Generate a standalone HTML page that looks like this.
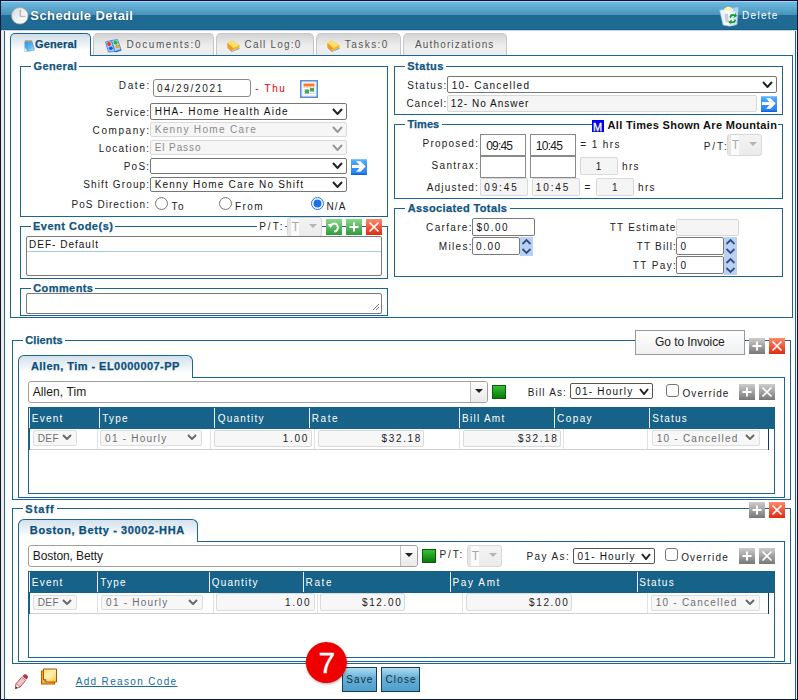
<!DOCTYPE html><html><head><meta charset="utf-8"><style>
html,body{margin:0;padding:0;width:798px;height:700px;overflow:hidden;background:#fff;font-family:"Liberation Sans", sans-serif;}
.a{position:absolute}
.t{white-space:pre}
svg{display:block}
</style></head><body>
<div class="a" style="left:0px;top:0px;width:798px;height:1px;background:#0b1730"></div>
<div class="a" style="left:0px;top:699px;width:798px;height:1px;background:#0b1730"></div>
<div class="a" style="left:0px;top:0px;width:1px;height:700px;background:#0b1730"></div>
<div class="a" style="left:797px;top:0px;width:1px;height:700px;background:#0b1730"></div>
<div class="a" style="left:1px;top:31px;width:3px;height:668px;background:#eeeae7"></div>
<div class="a" style="left:4px;top:31px;width:1px;height:668px;background:#1b6690"></div>
<div class="a" style="left:796px;top:31px;width:1px;height:668px;background:#eeeae7"></div>
<div class="a" style="left:795px;top:31px;width:1px;height:668px;background:#1b6690"></div>
<div class="a" style="left:1px;top:1px;width:796px;height:1px;background:#b9c9f5"></div>
<div class="a" style="left:1px;top:2px;width:796px;height:13px;background:linear-gradient(#6dbbe0,#4892bb)"></div>
<div class="a" style="left:1px;top:15px;width:796px;height:15px;background:#1e6a92"></div>
<div class="a" style="left:1px;top:29px;width:796px;height:1px;background:#195f85"></div>
<div class="a" style="left:1px;top:30px;width:796px;height:1px;background:#c7d5f7"></div>
<svg class="a" style="left:11px;top:7px" width="18" height="18" viewBox="0 0 18 18">
<defs><linearGradient id="cg" x1="0" y1="0" x2="1" y2="1"><stop offset="0" stop-color="#d8dadd"/><stop offset="0.5" stop-color="#eef0f2"/><stop offset="1" stop-color="#ffffff"/></linearGradient></defs>
<circle cx="8.8" cy="8.8" r="8.3" fill="url(#cg)" stroke="#a8a29a" stroke-width="0.7"/>
<line x1="9.2" y1="2.6" x2="9.2" y2="9.4" stroke="#8c9298" stroke-width="0.8"/>
<line x1="9.2" y1="9.4" x2="14.5" y2="9.4" stroke="#a0a6ac" stroke-width="0.8"/>
</svg>
<div class="a t" style="left:30.34px;top:9px;font-size:13px;line-height:13px;color:#fff;font-weight:700;letter-spacing:0.412px;text-shadow:0 0 1px #0a3a5a">Schedule Detail</div>
<svg class="a" style="left:719px;top:6px" width="21" height="21" viewBox="0 0 21 21">
<defs><linearGradient id="bing" x1="0" y1="0" x2="1" y2="0"><stop offset="0" stop-color="#d8f0ff"/><stop offset="0.45" stop-color="#ffffff"/><stop offset="1" stop-color="#bcd8f4"/></linearGradient></defs>
<path d="M0.5,4 L19.5,1.5 L18,18.5 Q11,21.5 4,19 Z" fill="url(#bing)" stroke="#9bb4cc" stroke-width="0.6"/>
<path d="M5,2.5 L9,0.6 L13,1.8 L12,4.5 L6,5 Z" fill="#fff3a0"/>
<path d="M14,1.8 L19,1.2 L18,5 L14,5 Z" fill="#a8ccff"/>
<path d="M5.5,8 L9,7.5 L10,17 L6.5,16 Z" fill="#c8b8f0" opacity="0.8"/>
<path d="M10.5,11 Q11,7 16,8.5 L16,6.5 L18,10 L14.5,12 L15.3,10.2 Q12.5,9.5 11.8,12.5 Z" fill="#10a020"/>
<path d="M17,14 Q16.3,18.2 11.5,17 L11.5,19 L9.5,15.5 L13,13.5 L12.3,15.3 Q15,16 15.6,13.2 Z" fill="#10a020"/>
</svg>
<div class="a t" style="left:741.98px;top:11px;font-size:10px;line-height:10px;color:#fff;font-weight:400;letter-spacing:1.312px;">Delete</div>
<div class="a" style="left:10px;top:55px;width:783px;height:263px;border:1px solid #1b6690;box-sizing:border-box"></div>
<div class="a" style="left:10px;top:33px;width:81px;height:23px;border:1px solid #1b6690;border-bottom:none;box-sizing:border-box;border-radius:5px 5px 0 0;background:linear-gradient(#cfdde8,#ffffff 75%)"></div>
<svg class="a" style="left:24px;top:40px" width="11" height="13" viewBox="0 0 11 13">
<defs><linearGradient id="ntg" x1="0" y1="0" x2="1" y2="1"><stop offset="0" stop-color="#2a90e8"/><stop offset="0.6" stop-color="#5ec0fa"/><stop offset="1" stop-color="#c8f0d0"/></linearGradient></defs>
<rect x="0.8" y="0.3" width="7.5" height="2" fill="#b09a70"/>
<path d="M0.8,2 L8.3,2 L10.6,10.2 L1,11.8 Z" fill="url(#ntg)" stroke="#7a90c8" stroke-width="0.6"/>
<path d="M1,7.5 L3.5,11.4 L1,11.8 Z" fill="#d8f8b0"/>
</svg>
<div class="a t" style="left:35.05px;top:39px;font-size:11px;line-height:11px;color:#0c4a72;font-weight:700;letter-spacing:0.126px;-webkit-text-stroke:0.25px #0c4a72">General</div>
<div class="a" style="left:93px;top:33px;width:121px;height:23px;border:1px solid #c6c6c6;border-bottom:none;box-sizing:border-box;border-radius:5px 5px 0 0;background:linear-gradient(#d4d4d4,#eeeeee 55%,#ececec)"></div>
<svg class="a" style="left:105px;top:39px" width="18" height="14" viewBox="0 0 18 14">
<path d="M0.5,3 L6.5,1.5 L10,12.5 L3.5,13 Z" fill="#9ccaf6" stroke="#3a78d8" stroke-width="0.8"/>
<path d="M6.5,1.5 L12.5,0.5 L16,10.5 L10,12.5 Z" fill="#b4dafa" stroke="#3a78d8" stroke-width="0.8"/>
<path d="M10,12.5 L16,10.5 L16.5,11.5 L10.5,13.5 Z" fill="#2a60c0"/>
<ellipse cx="4" cy="5" rx="1.8" ry="2" fill="#ff2a10"/>
<ellipse cx="5.8" cy="9.3" rx="1.9" ry="1.8" fill="#0a5af0"/>
<ellipse cx="10.5" cy="3.6" rx="2" ry="1.9" fill="#10c020"/>
<ellipse cx="12.3" cy="7.6" rx="2" ry="2" fill="#ffa010"/>
</svg>
<div class="a t" style="left:126.58px;top:40px;font-size:10px;line-height:10px;color:#555;font-weight:400;letter-spacing:1.489px;">Documents:0</div>
<div class="a" style="left:216px;top:33px;width:98px;height:23px;border:1px solid #c6c6c6;border-bottom:none;box-sizing:border-box;border-radius:5px 5px 0 0;background:linear-gradient(#d4d4d4,#eeeeee 55%,#ececec)"></div>
<svg class="a" style="left:227px;top:40px" width="13" height="12" viewBox="0 0 13 12">
<path d="M0.5,6.5 L4.5,11 L12.5,7.5 L12.5,9 L4.5,12 L0.5,8 Z" fill="#9c9ccc"/>
<path d="M0.5,3 L5,0.5 L12.5,5 L12.5,7.5 L4.5,11 L0.5,6.5 Z" fill="#f2b82a"/>
<path d="M0.5,3 L5,0.5 L12.5,5 L6,8 Z" fill="#fde070"/>
<path d="M0.5,3 L6,8 L4.5,11 L0.5,6.5 Z" fill="#f59a10"/>
</svg>
<div class="a t" style="left:244.50px;top:40px;font-size:10px;line-height:10px;color:#555;font-weight:400;letter-spacing:1.206px;">Call Log:0</div>
<div class="a" style="left:316px;top:33px;width:85px;height:23px;border:1px solid #c6c6c6;border-bottom:none;box-sizing:border-box;border-radius:5px 5px 0 0;background:linear-gradient(#d4d4d4,#eeeeee 55%,#ececec)"></div>
<svg class="a" style="left:327px;top:40px" width="13" height="12" viewBox="0 0 13 12">
<path d="M0.5,6.5 L4.5,11 L12.5,7.5 L12.5,9 L4.5,12 L0.5,8 Z" fill="#9c9ccc"/>
<path d="M0.5,3 L5,0.5 L12.5,5 L12.5,7.5 L4.5,11 L0.5,6.5 Z" fill="#f2b82a"/>
<path d="M0.5,3 L5,0.5 L12.5,5 L6,8 Z" fill="#fde070"/>
<path d="M0.5,3 L6,8 L4.5,11 L0.5,6.5 Z" fill="#f59a10"/>
</svg>
<div class="a t" style="left:344.78px;top:40px;font-size:10px;line-height:10px;color:#555;font-weight:400;letter-spacing:1.450px;">Tasks:0</div>
<div class="a" style="left:403px;top:33px;width:104px;height:23px;border:1px solid #c6c6c6;border-bottom:none;box-sizing:border-box;border-radius:5px 5px 0 0;background:linear-gradient(#d4d4d4,#eeeeee 55%,#ececec)"></div>
<div class="a t" style="left:414.98px;top:40px;font-size:10px;line-height:10px;color:#555;font-weight:400;letter-spacing:1.155px;">Authorizations</div>
<div class="a" style="left:10px;top:55px;width:783px;height:1px;background:#1b6690"></div>
<div class="a" style="left:11px;top:55px;width:79px;height:1px;background:#fff"></div>
<div class="a" style="left:20px;top:66px;width:368px;height:151px;border:1px solid #1b6690;box-sizing:border-box"></div>
<div class="a" style="left:31px;top:65px;width:48px;height:3px;background:#fff"></div>
<div class="a t" style="left:33.55px;top:61px;font-size:11px;line-height:11px;color:#10557f;font-weight:700;letter-spacing:0.376px;-webkit-text-stroke:0.25px #10557f">General</div>
<div class="a t" style="left:118.78px;top:81px;font-size:10px;line-height:10px;color:#222;font-weight:400;letter-spacing:1.658px;">Date:</div>
<div class="a" style="left:153px;top:79px;width:98px;height:18px;background:#fff;border:1px solid #8a8a8a;box-sizing:border-box;border-radius:3px"></div>
<div class="a t" style="left:157.01px;top:84px;font-size:10px;line-height:10px;color:#1a1a1a;font-weight:400;letter-spacing:1.702px;">04/29/2021</div>
<div class="a t" style="left:255.36px;top:84px;font-size:10px;line-height:10px;color:#e80000;font-weight:400;letter-spacing:1.585px;">- Thu</div>
<svg class="a" style="left:300px;top:80px" width="18" height="18" viewBox="0 0 18 18">
<rect x="0.8" y="0.8" width="16.4" height="16.4" fill="#fff" stroke="#5b8ed5" stroke-width="1.6"/>
<rect x="2.2" y="2.2" width="13.6" height="13.6" fill="none" stroke="#d6e6fa" stroke-width="0.8"/>
<rect x="3.5" y="3.5" width="11" height="3" fill="#ff7a22"/>
<path d="M3.5,7.5 H14.5 M3.5,10.5 H14.5 M3.5,13.5 H14.5 M4.5,7 V15 M7.5,7 V15 M10.5,7 V15 M13.5,7 V15" stroke="#a9c8ef" stroke-width="0.7" stroke-dasharray="1,1"/>
<rect x="5" y="9.5" width="4" height="4" fill="#4aa84a"/>
<rect x="10" y="8" width="4" height="3.5" fill="#4aa84a"/>
</svg>
<div class="a t" style="left:106.05px;top:108px;font-size:10px;line-height:10px;color:#222;font-weight:400;letter-spacing:0.990px;">Service:</div>
<div class="a" style="left:150px;top:103px;width:197px;height:17px;background:#fff;border:1px solid #767676;box-sizing:border-box;border-radius:2px"></div>
<svg class="a" style="left:332px;top:108px" width="11" height="7" viewBox="0 0 11 7"><polyline points="1,1 5.5,6 10,1" fill="none" stroke="#222" stroke-width="2"/></svg>
<div class="a t" style="left:154.68px;top:107px;font-size:10px;line-height:10px;color:#111;font-weight:400;letter-spacing:1.252px;">HHA- Home Health Aide</div>
<div class="a t" style="left:92.60px;top:126px;font-size:10px;line-height:10px;color:#222;font-weight:400;letter-spacing:1.561px;">Company:</div>
<div class="a" style="left:150px;top:122px;width:197px;height:15px;background:#f6f6f6;border:1px solid #dadada;box-sizing:border-box;border-radius:2px"></div>
<svg class="a" style="left:332px;top:126px" width="11" height="7" viewBox="0 0 11 7"><polyline points="1,1 5.5,6 10,1" fill="none" stroke="#999" stroke-width="2"/></svg>
<div class="a t" style="left:154.68px;top:125.30000000000001px;font-size:10px;line-height:10px;color:#8a8a8a;font-weight:400;letter-spacing:1.343px;">Kenny Home Care</div>
<div class="a t" style="left:98.68px;top:144px;font-size:10px;line-height:10px;color:#222;font-weight:400;letter-spacing:1.230px;">Location:</div>
<div class="a" style="left:150px;top:140px;width:197px;height:15px;background:#f6f6f6;border:1px solid #dadada;box-sizing:border-box;border-radius:2px"></div>
<svg class="a" style="left:332px;top:144px" width="11" height="7" viewBox="0 0 11 7"><polyline points="1,1 5.5,6 10,1" fill="none" stroke="#999" stroke-width="2"/></svg>
<div class="a t" style="left:154.68px;top:143px;font-size:10px;line-height:10px;color:#8a8a8a;font-weight:400;letter-spacing:0.910px;">El Passo</div>
<div class="a t" style="left:123.68px;top:162px;font-size:10px;line-height:10px;color:#222;font-weight:400;letter-spacing:1.250px;">PoS:</div>
<div class="a" style="left:150px;top:158px;width:197px;height:16px;background:#fff;border:1px solid #767676;box-sizing:border-box;border-radius:2px"></div>
<svg class="a" style="left:332px;top:162px" width="11" height="7" viewBox="0 0 11 7"><polyline points="1,1 5.5,6 10,1" fill="none" stroke="#222" stroke-width="2"/></svg>
<div class="a t" style="left:83.15px;top:180px;font-size:10px;line-height:10px;color:#222;font-weight:400;letter-spacing:1.145px;">Shift Group:</div>
<div class="a" style="left:150px;top:177px;width:197px;height:15px;background:#fff;border:1px solid #767676;box-sizing:border-box;border-radius:2px"></div>
<svg class="a" style="left:332px;top:181px" width="11" height="7" viewBox="0 0 11 7"><polyline points="1,1 5.5,6 10,1" fill="none" stroke="#222" stroke-width="2"/></svg>
<div class="a t" style="left:154.68px;top:179.5px;font-size:10px;line-height:10px;color:#111;font-weight:400;letter-spacing:1.203px;">Kenny Home Care No Shift</div>
<svg class="a" style="left:351px;top:159px" width="16" height="16" viewBox="0 0 16 16">
<defs><linearGradient id="ag351159" x1="0" y1="0" x2="0" y2="1"><stop offset="0" stop-color="#8fd0ff"/><stop offset="0.12" stop-color="#4aa8fa"/><stop offset="0.85" stop-color="#2a86f0"/><stop offset="1" stop-color="#0a5ad8"/></linearGradient></defs>
<rect x="0" y="0" width="16" height="16" fill="url(#ag351159)"/>
<path d="M1,6 L8.5,6 L5,2.2 L9.6,2.2 L14.6,7.5 L9.6,12.8 L5,12.8 L8.5,9 L1,9 Z" fill="#fff"/>
</svg>
<div class="a t" style="left:71.58px;top:199.5px;font-size:10px;line-height:10px;color:#222;font-weight:400;letter-spacing:1.032px;">PoS Direction:</div>
<svg class="a" style="left:155px;top:197px" width="13" height="13" viewBox="0 0 13 13"><circle cx="6.5" cy="6.5" r="6" fill="#fff" stroke="#767676" stroke-width="1"/></svg>
<div class="a t" style="left:171.58px;top:201.6px;font-size:10px;line-height:10px;color:#222;font-weight:400;letter-spacing:1.370px;">To</div>
<svg class="a" style="left:219px;top:197px" width="13" height="13" viewBox="0 0 13 13"><circle cx="6.5" cy="6.5" r="6" fill="#fff" stroke="#767676" stroke-width="1"/></svg>
<div class="a t" style="left:234.88px;top:201.6px;font-size:10px;line-height:10px;color:#222;font-weight:400;letter-spacing:1.480px;">From</div>
<svg class="a" style="left:311px;top:197px" width="13" height="13" viewBox="0 0 13 13"><circle cx="6.5" cy="6.5" r="6" fill="#fff" stroke="#1a73e8" stroke-width="1"/><circle cx="6.5" cy="6.5" r="4" fill="#1a73e8"/></svg>
<div class="a t" style="left:326.38px;top:201.6px;font-size:10px;line-height:10px;color:#222;font-weight:400;letter-spacing:1.235px;">N/A</div>
<div class="a" style="left:20px;top:226px;width:368px;height:53px;border:1px solid #1b6690;box-sizing:border-box"></div>
<div class="a" style="left:30.700000000000003px;top:225px;width:84.7px;height:3px;background:#fff"></div>
<div class="a t" style="left:32.97px;top:221px;font-size:11px;line-height:11px;color:#10557f;font-weight:700;letter-spacing:0.501px;-webkit-text-stroke:0.25px #10557f">Event Code(s)</div>
<div class="a" style="left:257px;top:225px;width:28px;height:3px;background:#fff"></div>
<div class="a t" style="left:259.18px;top:222px;font-size:10px;line-height:10px;color:#222;font-weight:400;letter-spacing:2.033px;">P/T:</div>
<div class="a" style="left:287px;top:217px;width:35px;height:20px;background:linear-gradient(#f4f4f4,#ebebeb);border:1px solid #d8d8d8;box-sizing:border-box;border-radius:3px"></div>
<div class="a" style="left:291px;top:218px;width:8px;height:18px;background:#fbfbfb"></div>
<div class="a" style="left:288px;top:218px;width:3px;height:18px;background:#e6e6e6"></div>
<div class="a t" style="left:291.74px;top:221px;font-size:12px;line-height:12px;color:#aaaaaa;font-weight:400;letter-spacing:1.000px;">T</div>
<svg class="a" style="left:309px;top:224px" width="8" height="5"><polygon points="0,0 8,0 4,4" fill="#b4b4b4"/></svg>
<svg class="a" style="left:326px;top:219px" width="16" height="16" viewBox="0 0 16 16">
<defs><linearGradient id="b326219" x1="0" y1="0" x2="0" y2="1"><stop offset="0" stop-color="#8ad88a"/><stop offset="1" stop-color="#2f9a3a"/></linearGradient></defs>
<rect x="0" y="0" width="16" height="16" fill="url(#b326219)"/><path d="M4.5,6.5 A4,4 0 1 1 8,12.5" fill="none" stroke="#fff" stroke-width="2"/><polygon points="1.5,5 7.5,5 4.5,9" fill="#fff"/></svg>
<svg class="a" style="left:346px;top:219px" width="16" height="16" viewBox="0 0 16 16">
<defs><linearGradient id="b346219" x1="0" y1="0" x2="0" y2="1"><stop offset="0" stop-color="#8ad88a"/><stop offset="1" stop-color="#2f9a3a"/></linearGradient></defs>
<rect x="0" y="0" width="16" height="16" fill="url(#b346219)"/><path d="M7,3.5 L9,3.5 L9,7 L12.5,7 L12.5,9 L9,9 L9,12.5 L7,12.5 L7,9 L3.5,9 L3.5,7 L7,7 Z" fill="#fff"/></svg>
<svg class="a" style="left:366px;top:219px" width="16" height="16" viewBox="0 0 16 16">
<defs><linearGradient id="b366219" x1="0" y1="0" x2="0" y2="1"><stop offset="0" stop-color="#ff8a6a"/><stop offset="1" stop-color="#e02a10"/></linearGradient></defs>
<rect x="0" y="0" width="16" height="16" fill="url(#b366219)"/><path d="M3.5,3.5 L12.5,12.5 M12.5,3.5 L3.5,12.5" stroke="#fff" stroke-width="1.7"/></svg>
<div class="a" style="left:26px;top:236px;width:356px;height:40px;border:1px solid #7a7a7a;box-sizing:border-box;border-radius:2px;background:#fff"></div>
<div class="a" style="left:27px;top:251px;width:354px;height:1px;background:#a8cde0"></div>
<div class="a t" style="left:28.98px;top:240px;font-size:10px;line-height:10px;color:#111;font-weight:400;letter-spacing:1.017px;">DEF- Default</div>
<div class="a" style="left:20px;top:288px;width:368px;height:28px;border:1px solid #1b6690;box-sizing:border-box"></div>
<div class="a" style="left:30.700000000000003px;top:287px;width:64.8px;height:3px;background:#fff"></div>
<div class="a t" style="left:33.25px;top:283px;font-size:11px;line-height:11px;color:#10557f;font-weight:700;letter-spacing:0.408px;-webkit-text-stroke:0.25px #10557f">Comments</div>
<div class="a" style="left:26px;top:293px;width:356px;height:21px;border:1px solid #7a7a7a;box-sizing:border-box;border-radius:2px;background:#fff"></div>
<svg class="a" style="left:372px;top:303px" width="8" height="8"><path d="M7,1 L1,7 M7,4 L4,7" stroke="#777" stroke-width="1"/></svg>
<div class="a" style="left:394px;top:66px;width:389px;height:49px;border:1px solid #1b6690;box-sizing:border-box"></div>
<div class="a" style="left:404.6px;top:65px;width:41.39999999999998px;height:3px;background:#fff"></div>
<div class="a t" style="left:407.29px;top:61px;font-size:11px;line-height:11px;color:#10557f;font-weight:700;letter-spacing:0.506px;-webkit-text-stroke:0.25px #10557f">Status</div>
<div class="a t" style="left:407.25px;top:81px;font-size:10px;line-height:10px;color:#222;font-weight:400;letter-spacing:1.322px;">Status:</div>
<div class="a" style="left:447px;top:76px;width:330px;height:17px;background:#fff;border:1px solid #767676;box-sizing:border-box;border-radius:2px"></div>
<svg class="a" style="left:762px;top:81px" width="11" height="7" viewBox="0 0 11 7"><polyline points="1,1 5.5,6 10,1" fill="none" stroke="#222" stroke-width="2"/></svg>
<div class="a t" style="left:451.74px;top:80.5px;font-size:10px;line-height:10px;color:#111;font-weight:400;letter-spacing:1.292px;">10- Cancelled</div>
<div class="a t" style="left:406.40px;top:99px;font-size:10px;line-height:10px;color:#222;font-weight:400;letter-spacing:1.000px;">Cancel:</div>
<div class="a" style="left:447px;top:95px;width:310px;height:17px;background:#f5f5f5;border:1px solid #d8d8d8;box-sizing:border-box;border-radius:2px"></div>
<div class="a t" style="left:450.74px;top:99px;font-size:10px;line-height:10px;color:#111;font-weight:400;letter-spacing:1.000px;">12- No Answer</div>
<svg class="a" style="left:761px;top:96px" width="16" height="16" viewBox="0 0 16 16">
<defs><linearGradient id="ag76196" x1="0" y1="0" x2="0" y2="1"><stop offset="0" stop-color="#8fd0ff"/><stop offset="0.12" stop-color="#4aa8fa"/><stop offset="0.85" stop-color="#2a86f0"/><stop offset="1" stop-color="#0a5ad8"/></linearGradient></defs>
<rect x="0" y="0" width="16" height="16" fill="url(#ag76196)"/>
<path d="M1,6 L8.5,6 L5,2.2 L9.6,2.2 L14.6,7.5 L9.6,12.8 L5,12.8 L8.5,9 L1,9 Z" fill="#fff"/>
</svg>
<div class="a" style="left:394px;top:124px;width:389px;height:75px;border:1px solid #1b6690;box-sizing:border-box"></div>
<div class="a" style="left:404.6px;top:123px;width:37.099999999999966px;height:3px;background:#fff"></div>
<div class="a t" style="left:407.48px;top:119px;font-size:11px;line-height:11px;color:#10557f;font-weight:700;letter-spacing:0.017px;-webkit-text-stroke:0.25px #10557f">Times</div>
<div class="a" style="left:604px;top:121px;width:174px;height:6px;background:#fff"></div>
<div class="a" style="left:592px;top:120px;width:12px;height:12px;background:#0000f0"></div>
<div class="a t" style="left:593.10px;top:121.5px;font-size:11px;line-height:11px;color:#fff;font-weight:400;letter-spacing:1.000px;-webkit-text-stroke:0.3px #fff">M</div>
<div class="a t" style="left:607.54px;top:119.80000000000001px;font-size:11px;line-height:11px;color:#111;font-weight:700;letter-spacing:0.319px;">All Times Shown Are Mountain</div>
<div class="a t" style="left:422.58px;top:139px;font-size:10px;line-height:10px;color:#222;font-weight:400;letter-spacing:1.218px;">Proposed:</div>
<div class="a t" style="left:431.55px;top:161px;font-size:10px;line-height:10px;color:#222;font-weight:400;letter-spacing:1.303px;">Santrax:</div>
<div class="a t" style="left:426.78px;top:183px;font-size:10px;line-height:10px;color:#222;font-weight:400;letter-spacing:1.179px;">Adjusted:</div>
<div class="a" style="left:480px;top:134px;width:46px;height:22px;border:1px solid #8a8a8a;box-sizing:border-box;background:#fff"></div>
<div class="a" style="left:480px;top:156px;width:46px;height:22px;border:1px solid #8a8a8a;box-sizing:border-box;background:#fff"></div>
<div class="a" style="left:530px;top:134px;width:46px;height:22px;border:1px solid #8a8a8a;box-sizing:border-box;background:#fff"></div>
<div class="a" style="left:530px;top:156px;width:46px;height:22px;border:1px solid #8a8a8a;box-sizing:border-box;background:#fff"></div>
<div class="a t" style="left:486.23px;top:140px;font-size:12px;line-height:12px;color:#1a1a1a;font-weight:400;letter-spacing:-0.816px;">09:45</div>
<div class="a t" style="left:535.79px;top:140px;font-size:12px;line-height:12px;color:#1a1a1a;font-weight:400;letter-spacing:-0.705px;">10:45</div>
<div class="a t" style="left:580.22px;top:140px;font-size:10px;line-height:10px;color:#222;font-weight:400;letter-spacing:1.415px;">= 1 hrs</div>
<div class="a" style="left:580px;top:157px;width:38px;height:18px;background:#f5f5f5;border:1px solid #d8d8d8;box-sizing:border-box;border-radius:2px"></div>
<div class="a t" style="left:595.74px;top:162px;font-size:10px;line-height:10px;color:#222;font-weight:400;letter-spacing:1.000px;">1</div>
<div class="a t" style="left:622.11px;top:162px;font-size:10px;line-height:10px;color:#222;font-weight:400;letter-spacing:1.230px;">hrs</div>
<div class="a" style="left:480px;top:178px;width:48px;height:18px;background:#f5f5f5;border:1px solid #d8d8d8;box-sizing:border-box;border-radius:2px"></div>
<div class="a" style="left:532px;top:178px;width:48px;height:18px;background:#f5f5f5;border:1px solid #d8d8d8;box-sizing:border-box;border-radius:2px"></div>
<div class="a t" style="left:484.21px;top:182.6px;font-size:10px;line-height:10px;color:#1a1a1a;font-weight:400;letter-spacing:1.895px;">09:45</div>
<div class="a t" style="left:535.74px;top:182.6px;font-size:10px;line-height:10px;color:#1a1a1a;font-weight:400;letter-spacing:1.913px;">10:45</div>
<div class="a t" style="left:584.52px;top:183px;font-size:10px;line-height:10px;color:#222;font-weight:400;letter-spacing:1.000px;">=</div>
<div class="a" style="left:596px;top:178px;width:38px;height:18px;background:#f5f5f5;border:1px solid #d8d8d8;box-sizing:border-box;border-radius:2px"></div>
<div class="a t" style="left:612.04px;top:183px;font-size:10px;line-height:10px;color:#222;font-weight:400;letter-spacing:1.000px;">1</div>
<div class="a t" style="left:638.11px;top:183px;font-size:10px;line-height:10px;color:#222;font-weight:400;letter-spacing:1.230px;">hrs</div>
<div class="a t" style="left:703.68px;top:142.3px;font-size:10px;line-height:10px;color:#222;font-weight:400;letter-spacing:2.000px;">P/T:</div>
<div class="a" style="left:727px;top:134px;width:35px;height:22px;background:linear-gradient(#f4f4f4,#ebebeb);border:1px solid #d8d8d8;box-sizing:border-box;border-radius:3px"></div>
<div class="a" style="left:731px;top:135px;width:8px;height:20px;background:#fbfbfb"></div>
<div class="a" style="left:728px;top:135px;width:3px;height:20px;background:#e6e6e6"></div>
<div class="a t" style="left:731.74px;top:139px;font-size:12px;line-height:12px;color:#aaaaaa;font-weight:400;letter-spacing:1.000px;">T</div>
<svg class="a" style="left:749px;top:142px" width="8" height="5"><polygon points="0,0 8,0 4,4" fill="#b4b4b4"/></svg>
<div class="a" style="left:394px;top:208px;width:389px;height:69px;border:1px solid #1b6690;box-sizing:border-box"></div>
<div class="a" style="left:405px;top:207px;width:104.5px;height:3px;background:#fff"></div>
<div class="a t" style="left:407.74px;top:203px;font-size:11px;line-height:11px;color:#10557f;font-weight:700;letter-spacing:0.367px;-webkit-text-stroke:0.25px #10557f">Associated Totals</div>
<div class="a t" style="left:426.10px;top:222.6px;font-size:10px;line-height:10px;color:#222;font-weight:400;letter-spacing:1.326px;">Carfare:</div>
<div class="a" style="left:472px;top:218px;width:63px;height:18px;background:#fff;border:1px solid #7a7a7a;box-sizing:border-box;border-radius:2px"></div>
<div class="a t" style="left:476.40px;top:222.6px;font-size:10px;line-height:10px;color:#111;font-weight:400;letter-spacing:1.565px;">$0.00</div>
<div class="a t" style="left:438.78px;top:241.8px;font-size:10px;line-height:10px;color:#222;font-weight:400;letter-spacing:1.322px;">Miles:</div>
<div class="a" style="left:472px;top:237px;width:48px;height:18px;background:#fff;border:1px solid #7a7a7a;box-sizing:border-box;border-radius:2px"></div>
<div class="a t" style="left:476.11px;top:241.8px;font-size:10px;line-height:10px;color:#111;font-weight:400;letter-spacing:1.503px;">0.00</div>
<svg class="a" style="left:520px;top:237px" width="13" height="19" viewBox="0 0 13 19">
<rect x="0" y="0" width="13" height="19" fill="#bcd0f2"/>
<polyline points="2.5,7 6.5,3 10.5,7" fill="none" stroke="#2b4f8a" stroke-width="1.8"/>
<polyline points="2.5,12 6.5,16 10.5,12" fill="none" stroke="#2b4f8a" stroke-width="1.8"/>
</svg>
<div class="a t" style="left:609.78px;top:223px;font-size:10px;line-height:10px;color:#222;font-weight:400;letter-spacing:1.195px;">TT Estimate</div>
<div class="a" style="left:676px;top:219px;width:63px;height:17px;background:#f5f5f5;border:1px solid #d8d8d8;box-sizing:border-box;border-radius:2px"></div>
<div class="a t" style="left:636.78px;top:242px;font-size:10px;line-height:10px;color:#222;font-weight:400;letter-spacing:1.171px;">TT Bill:</div>
<div class="a" style="left:676px;top:237px;width:48px;height:18px;background:#fff;border:1px solid #7a7a7a;box-sizing:border-box;border-radius:2px"></div>
<div class="a t" style="left:680.41px;top:242px;font-size:10px;line-height:10px;color:#111;font-weight:400;letter-spacing:1.000px;">0</div>
<svg class="a" style="left:724px;top:237px" width="13" height="19" viewBox="0 0 13 19">
<rect x="0" y="0" width="13" height="19" fill="#bcd0f2"/>
<polyline points="2.5,7 6.5,3 10.5,7" fill="none" stroke="#2b4f8a" stroke-width="1.8"/>
<polyline points="2.5,12 6.5,16 10.5,12" fill="none" stroke="#2b4f8a" stroke-width="1.8"/>
</svg>
<div class="a t" style="left:632.78px;top:261px;font-size:10px;line-height:10px;color:#222;font-weight:400;letter-spacing:1.383px;">TT Pay:</div>
<div class="a" style="left:676px;top:256px;width:48px;height:18px;background:#fff;border:1px solid #7a7a7a;box-sizing:border-box;border-radius:2px"></div>
<div class="a t" style="left:680.41px;top:261px;font-size:10px;line-height:10px;color:#111;font-weight:400;letter-spacing:1.000px;">0</div>
<svg class="a" style="left:724px;top:256px" width="13" height="19" viewBox="0 0 13 19">
<rect x="0" y="0" width="13" height="19" fill="#bcd0f2"/>
<polyline points="2.5,7 6.5,3 10.5,7" fill="none" stroke="#2b4f8a" stroke-width="1.8"/>
<polyline points="2.5,12 6.5,16 10.5,12" fill="none" stroke="#2b4f8a" stroke-width="1.8"/>
</svg>
<div class="a" style="left:12px;top:340px;width:779px;height:160px;border:1px solid #1b6690;box-sizing:border-box"></div>
<div class="a" style="left:22.6px;top:339px;width:42.6px;height:3px;background:#fff"></div>
<div class="a t" style="left:25.15px;top:335px;font-size:11px;line-height:11px;color:#10557f;font-weight:700;letter-spacing:0.136px;-webkit-text-stroke:0.25px #10557f">Clients</div>
<div class="a" style="left:635px;top:330px;width:110px;height:25px;background:linear-gradient(#ffffff,#f0f0f0);border:1px solid #9a9a9a;box-sizing:border-box"></div>
<div class="a t" style="left:655.10px;top:336px;font-size:12px;line-height:12px;color:#222;font-weight:400;letter-spacing:-0.090px;">Go to Invoice</div>
<svg class="a" style="left:749px;top:338px" width="16" height="16" viewBox="0 0 16 16">
<defs><linearGradient id="b749338" x1="0" y1="0" x2="0" y2="1"><stop offset="0" stop-color="#cdcdcd"/><stop offset="1" stop-color="#777777"/></linearGradient></defs>
<rect x="0" y="0" width="16" height="16" fill="url(#b749338)"/><path d="M7,3.5 L9,3.5 L9,7 L12.5,7 L12.5,9 L9,9 L9,12.5 L7,12.5 L7,9 L3.5,9 L3.5,7 L7,7 Z" fill="#fff"/></svg>
<svg class="a" style="left:769px;top:338px" width="16" height="16" viewBox="0 0 16 16">
<defs><linearGradient id="b769338" x1="0" y1="0" x2="0" y2="1"><stop offset="0" stop-color="#ff8a6a"/><stop offset="1" stop-color="#e02a10"/></linearGradient></defs>
<rect x="0" y="0" width="16" height="16" fill="url(#b769338)"/><path d="M3.5,3.5 L12.5,12.5 M12.5,3.5 L3.5,12.5" stroke="#fff" stroke-width="1.7"/></svg>
<div class="a" style="left:18px;top:377px;width:767px;height:121px;border:1px solid #1b6690;box-sizing:border-box"></div>
<div class="a" style="left:18px;top:355px;width:175px;height:23px;border:1px solid #1b6690;border-bottom:none;box-sizing:border-box;border-radius:6px 6px 0 0;background:linear-gradient(#d3e1ec,#ffffff 80%)"></div>
<div class="a" style="left:19px;top:377px;width:173px;height:1px;background:#fff"></div>
<div class="a t" style="left:30.94px;top:361px;font-size:11px;line-height:11px;color:#0c4f7a;font-weight:700;letter-spacing:0.462px;-webkit-text-stroke:0.25px #0c4f7a">Allen, Tim - EL0000007-PP</div>
<div class="a" style="left:28px;top:381px;width:460px;height:22px;border:1px solid #a0a0a0;box-sizing:border-box;border-radius:3px;background:#fff"></div>
<div class="a" style="left:470px;top:382px;width:17px;height:20px;border-left:1px solid #bdbdbd;box-sizing:border-box;background:linear-gradient(#fdfdfd,#e9e9e9);border-radius:0 2px 2px 0"></div>
<svg class="a" style="left:475px;top:389px" width="8" height="5"><polygon points="0,0 8,0 4,4" fill="#222"/></svg>
<div class="a t" style="left:32.68px;top:386px;font-size:12px;line-height:12px;color:#1a1a1a;font-weight:400;letter-spacing:0.092px;">Allen, Tim</div>
<div class="a" style="left:492px;top:385px;width:14px;height:14px;background:linear-gradient(#34c034,#0a7a0a);border:1px solid #0c5a0c;box-sizing:border-box"></div>
<div class="a t" style="left:527.78px;top:388px;font-size:10px;line-height:10px;color:#222;font-weight:400;letter-spacing:1.160px;">Bill As:</div>
<div class="a" style="left:570px;top:383px;width:83px;height:16px;border:1px solid #555;box-sizing:border-box;border-radius:2px;background:#fff"></div>
<div class="a t" style="left:575.31px;top:387px;font-size:10px;line-height:10px;color:#111;font-weight:400;letter-spacing:1.198px;">01- Hourly</div>
<svg class="a" style="left:639px;top:388px" width="10" height="7" viewBox="0 0 10 7"><polyline points="1,1 5.0,6 9,1" fill="none" stroke="#222" stroke-width="2"/></svg>
<div class="a" style="left:666px;top:384px;width:13px;height:13px;border:1px solid #767676;box-sizing:border-box;border-radius:3px;background:#fff"></div>
<div class="a t" style="left:682.53px;top:389px;font-size:10px;line-height:10px;color:#222;font-weight:400;letter-spacing:1.081px;">Override</div>
<svg class="a" style="left:739px;top:384px" width="16" height="16" viewBox="0 0 16 16">
<defs><linearGradient id="b739384" x1="0" y1="0" x2="0" y2="1"><stop offset="0" stop-color="#cdcdcd"/><stop offset="1" stop-color="#777777"/></linearGradient></defs>
<rect x="0" y="0" width="16" height="16" fill="url(#b739384)"/><path d="M7,3.5 L9,3.5 L9,7 L12.5,7 L12.5,9 L9,9 L9,12.5 L7,12.5 L7,9 L3.5,9 L3.5,7 L7,7 Z" fill="#fff"/></svg>
<svg class="a" style="left:759px;top:384px" width="16" height="16" viewBox="0 0 16 16">
<defs><linearGradient id="b759384" x1="0" y1="0" x2="0" y2="1"><stop offset="0" stop-color="#cdcdcd"/><stop offset="1" stop-color="#777777"/></linearGradient></defs>
<rect x="0" y="0" width="16" height="16" fill="url(#b759384)"/><path d="M3.5,3.5 L12.5,12.5 M12.5,3.5 L3.5,12.5" stroke="#fff" stroke-width="1.7"/></svg>
<div class="a" style="left:28px;top:407px;width:747px;height:87px;border:1px solid #1b6690;box-sizing:border-box;background:#fff"></div>
<div class="a" style="left:28px;top:407px;width:747px;height:22px;background:#176288"></div>
<div class="a" style="left:29px;top:408px;width:1px;height:20px;background:#e8eef3"></div>
<div class="a" style="left:99px;top:408px;width:1px;height:20px;background:#e8eef3"></div>
<div class="a" style="left:214px;top:408px;width:1px;height:20px;background:#e8eef3"></div>
<div class="a" style="left:309px;top:408px;width:1px;height:20px;background:#e8eef3"></div>
<div class="a" style="left:459px;top:408px;width:1px;height:20px;background:#e8eef3"></div>
<div class="a" style="left:554px;top:408px;width:1px;height:20px;background:#e8eef3"></div>
<div class="a" style="left:649px;top:408px;width:1px;height:20px;background:#e8eef3"></div>
<div class="a t" style="left:31.78px;top:414px;font-size:10px;line-height:10px;color:#fff;font-weight:400;letter-spacing:1.255px;">Event</div>
<div class="a t" style="left:102.28px;top:414px;font-size:10px;line-height:10px;color:#fff;font-weight:400;letter-spacing:1.227px;">Type</div>
<div class="a t" style="left:217.83px;top:414px;font-size:10px;line-height:10px;color:#fff;font-weight:400;letter-spacing:1.193px;">Quantity</div>
<div class="a t" style="left:311.68px;top:414px;font-size:10px;line-height:10px;color:#fff;font-weight:400;letter-spacing:1.613px;">Rate</div>
<div class="a t" style="left:462.08px;top:414px;font-size:10px;line-height:10px;color:#fff;font-weight:400;letter-spacing:1.250px;">Bill Amt</div>
<div class="a t" style="left:557.10px;top:414px;font-size:10px;line-height:10px;color:#fff;font-weight:400;letter-spacing:1.402px;">Copay</div>
<div class="a t" style="left:652.25px;top:414px;font-size:10px;line-height:10px;color:#fff;font-weight:400;letter-spacing:1.232px;">Status</div>
<div class="a" style="left:29px;top:429px;width:740px;height:21px;background:#fff;border-bottom:1px solid #d0d0d0;box-sizing:border-box"></div>
<div class="a" style="left:768px;top:429px;width:1px;height:21px;background:#1a3a52"></div>
<div class="a" style="left:28px;top:429px;width:2px;height:21px;background:#176288"></div>
<div class="a" style="left:97px;top:429px;width:1px;height:20px;background:#e2e2e2"></div>
<div class="a" style="left:210px;top:429px;width:1px;height:20px;background:#e2e2e2"></div>
<div class="a" style="left:314px;top:429px;width:1px;height:20px;background:#e2e2e2"></div>
<div class="a" style="left:459px;top:429px;width:1px;height:20px;background:#e2e2e2"></div>
<div class="a" style="left:563px;top:429px;width:1px;height:20px;background:#e2e2e2"></div>
<div class="a" style="left:647px;top:429px;width:1px;height:20px;background:#e2e2e2"></div>
<div class="a" style="left:33px;top:430px;width:44px;height:16px;background:#f7f7f7;border:1px solid #dedede;box-sizing:border-box;border-radius:2px"></div>
<div class="a t" style="left:37.68px;top:434px;font-size:10px;line-height:10px;color:#6e6e6e;font-weight:400;letter-spacing:0.460px;">DEF</div>
<svg class="a" style="left:62px;top:434px" width="10" height="6" viewBox="0 0 10 6"><polyline points="1,1 5.0,5 9,1" fill="none" stroke="#6a6a6a" stroke-width="2"/></svg>
<div class="a" style="left:100px;top:430px;width:102px;height:16px;background:#f7f7f7;border:1px solid #dedede;box-sizing:border-box;border-radius:2px"></div>
<div class="a t" style="left:105.11px;top:434px;font-size:10px;line-height:10px;color:#6e6e6e;font-weight:400;letter-spacing:1.230px;">01 - Hourly</div>
<svg class="a" style="left:187px;top:434px" width="10" height="6" viewBox="0 0 10 6"><polyline points="1,1 5.0,5 9,1" fill="none" stroke="#6a6a6a" stroke-width="2"/></svg>
<div class="a" style="left:214px;top:430px;width:98px;height:17px;background:#f7f7f7;border:1px solid #dadada;box-sizing:border-box;border-radius:2px"></div>
<div class="a t" style="left:282.84px;top:434px;font-size:10px;line-height:10px;color:#222;font-weight:400;letter-spacing:1.693px;">1.00</div>
<div class="a" style="left:318px;top:430px;width:106px;height:17px;background:#f7f7f7;border:1px solid #dadada;box-sizing:border-box;border-radius:2px"></div>
<div class="a t" style="left:381.60px;top:434px;font-size:10px;line-height:10px;color:#222;font-weight:400;letter-spacing:1.630px;">$32.18</div>
<div class="a" style="left:463px;top:430px;width:98px;height:17px;background:#f7f7f7;border:1px solid #dadada;box-sizing:border-box;border-radius:2px"></div>
<div class="a t" style="left:518.10px;top:434px;font-size:10px;line-height:10px;color:#222;font-weight:400;letter-spacing:1.630px;">$32.18</div>
<div class="a" style="left:652px;top:430px;width:108px;height:16px;background:#f7f7f7;border:1px solid #dedede;box-sizing:border-box;border-radius:2px"></div>
<div class="a t" style="left:656.74px;top:434px;font-size:10px;line-height:10px;color:#6e6e6e;font-weight:400;letter-spacing:1.232px;">10 - Cancelled</div>
<svg class="a" style="left:745px;top:434px" width="10" height="6" viewBox="0 0 10 6"><polyline points="1,1 5.0,5 9,1" fill="none" stroke="#6a6a6a" stroke-width="2"/></svg>
<div class="a" style="left:12px;top:508px;width:779px;height:156px;border:1px solid #1b6690;box-sizing:border-box"></div>
<div class="a" style="left:22.6px;top:507px;width:34.199999999999996px;height:3px;background:#fff"></div>
<div class="a t" style="left:25.29px;top:504px;font-size:11px;line-height:11px;color:#10557f;font-weight:700;letter-spacing:1.011px;-webkit-text-stroke:0.25px #10557f">Staff</div>
<svg class="a" style="left:749px;top:502px" width="16" height="16" viewBox="0 0 16 16">
<defs><linearGradient id="b749502" x1="0" y1="0" x2="0" y2="1"><stop offset="0" stop-color="#cdcdcd"/><stop offset="1" stop-color="#777777"/></linearGradient></defs>
<rect x="0" y="0" width="16" height="16" fill="url(#b749502)"/><path d="M7,3.5 L9,3.5 L9,7 L12.5,7 L12.5,9 L9,9 L9,12.5 L7,12.5 L7,9 L3.5,9 L3.5,7 L7,7 Z" fill="#fff"/></svg>
<svg class="a" style="left:769px;top:502px" width="16" height="16" viewBox="0 0 16 16">
<defs><linearGradient id="b769502" x1="0" y1="0" x2="0" y2="1"><stop offset="0" stop-color="#ff8a6a"/><stop offset="1" stop-color="#e02a10"/></linearGradient></defs>
<rect x="0" y="0" width="16" height="16" fill="url(#b769502)"/><path d="M3.5,3.5 L12.5,12.5 M12.5,3.5 L3.5,12.5" stroke="#fff" stroke-width="1.7"/></svg>
<div class="a" style="left:18px;top:541px;width:767px;height:121px;border:1px solid #1b6690;box-sizing:border-box"></div>
<div class="a" style="left:18px;top:519px;width:180px;height:23px;border:1px solid #1b6690;border-bottom:none;box-sizing:border-box;border-radius:6px 6px 0 0;background:linear-gradient(#d3e1ec,#ffffff 80%)"></div>
<div class="a" style="left:19px;top:541px;width:178px;height:1px;background:#fff"></div>
<div class="a t" style="left:29.87px;top:525px;font-size:11px;line-height:11px;color:#0c4f7a;font-weight:700;letter-spacing:0.623px;-webkit-text-stroke:0.25px #0c4f7a">Boston, Betty - 30002-HHA</div>
<div class="a" style="left:28px;top:545px;width:390px;height:22px;border:1px solid #a0a0a0;box-sizing:border-box;border-radius:3px;background:#fff"></div>
<div class="a" style="left:400px;top:546px;width:17px;height:20px;border-left:1px solid #bdbdbd;box-sizing:border-box;background:linear-gradient(#fdfdfd,#e9e9e9);border-radius:0 2px 2px 0"></div>
<svg class="a" style="left:405px;top:553px" width="8" height="5"><polygon points="0,0 8,0 4,4" fill="#222"/></svg>
<div class="a t" style="left:32.77px;top:550px;font-size:12px;line-height:12px;color:#1a1a1a;font-weight:400;letter-spacing:-0.093px;">Boston, Betty</div>
<div class="a" style="left:422px;top:549px;width:14px;height:14px;background:linear-gradient(#34c034,#0a7a0a);border:1px solid #0c5a0c;box-sizing:border-box"></div>
<div class="a t" style="left:439.58px;top:550px;font-size:10px;line-height:10px;color:#222;font-weight:400;letter-spacing:1.833px;">P/T:</div>
<div class="a" style="left:467px;top:545px;width:35px;height:22px;background:linear-gradient(#f4f4f4,#ebebeb);border:1px solid #d8d8d8;box-sizing:border-box;border-radius:3px"></div>
<div class="a" style="left:471px;top:546px;width:8px;height:20px;background:#fbfbfb"></div>
<div class="a" style="left:468px;top:546px;width:3px;height:20px;background:#e6e6e6"></div>
<div class="a t" style="left:471.74px;top:550px;font-size:12px;line-height:12px;color:#aaaaaa;font-weight:400;letter-spacing:1.000px;">T</div>
<svg class="a" style="left:489px;top:553px" width="8" height="5"><polygon points="0,0 8,0 4,4" fill="#b4b4b4"/></svg>
<div class="a t" style="left:526.38px;top:552px;font-size:10px;line-height:10px;color:#222;font-weight:400;letter-spacing:1.403px;">Pay As:</div>
<div class="a" style="left:573px;top:548px;width:82px;height:16px;border:1px solid #555;box-sizing:border-box;border-radius:2px;background:#fff"></div>
<div class="a t" style="left:577.61px;top:552px;font-size:10px;line-height:10px;color:#111;font-weight:400;letter-spacing:1.198px;">01- Hourly</div>
<svg class="a" style="left:641px;top:553px" width="10" height="7" viewBox="0 0 10 7"><polyline points="1,1 5.0,6 9,1" fill="none" stroke="#222" stroke-width="2"/></svg>
<div class="a" style="left:665px;top:548px;width:13px;height:13px;border:1px solid #767676;box-sizing:border-box;border-radius:3px;background:#fff"></div>
<div class="a t" style="left:681.13px;top:553px;font-size:10px;line-height:10px;color:#222;font-weight:400;letter-spacing:1.181px;">Override</div>
<svg class="a" style="left:739px;top:548px" width="16" height="16" viewBox="0 0 16 16">
<defs><linearGradient id="b739548" x1="0" y1="0" x2="0" y2="1"><stop offset="0" stop-color="#cdcdcd"/><stop offset="1" stop-color="#777777"/></linearGradient></defs>
<rect x="0" y="0" width="16" height="16" fill="url(#b739548)"/><path d="M7,3.5 L9,3.5 L9,7 L12.5,7 L12.5,9 L9,9 L9,12.5 L7,12.5 L7,9 L3.5,9 L3.5,7 L7,7 Z" fill="#fff"/></svg>
<svg class="a" style="left:759px;top:548px" width="16" height="16" viewBox="0 0 16 16">
<defs><linearGradient id="b759548" x1="0" y1="0" x2="0" y2="1"><stop offset="0" stop-color="#cdcdcd"/><stop offset="1" stop-color="#777777"/></linearGradient></defs>
<rect x="0" y="0" width="16" height="16" fill="url(#b759548)"/><path d="M3.5,3.5 L12.5,12.5 M12.5,3.5 L3.5,12.5" stroke="#fff" stroke-width="1.7"/></svg>
<div class="a" style="left:28px;top:571px;width:747px;height:87px;border:1px solid #1b6690;box-sizing:border-box;background:#fff"></div>
<div class="a" style="left:28px;top:571px;width:747px;height:22px;background:#176288"></div>
<div class="a" style="left:29px;top:572px;width:1px;height:20px;background:#e8eef3"></div>
<div class="a" style="left:97px;top:572px;width:1px;height:20px;background:#e8eef3"></div>
<div class="a" style="left:209px;top:572px;width:1px;height:20px;background:#e8eef3"></div>
<div class="a" style="left:303px;top:572px;width:1px;height:20px;background:#e8eef3"></div>
<div class="a" style="left:450px;top:572px;width:1px;height:20px;background:#e8eef3"></div>
<div class="a" style="left:637px;top:572px;width:1px;height:20px;background:#e8eef3"></div>
<div class="a t" style="left:31.78px;top:578px;font-size:10px;line-height:10px;color:#fff;font-weight:400;letter-spacing:1.255px;">Event</div>
<div class="a t" style="left:100.18px;top:578px;font-size:10px;line-height:10px;color:#fff;font-weight:400;letter-spacing:1.227px;">Type</div>
<div class="a t" style="left:211.83px;top:578px;font-size:10px;line-height:10px;color:#fff;font-weight:400;letter-spacing:1.193px;">Quantity</div>
<div class="a t" style="left:305.58px;top:578px;font-size:10px;line-height:10px;color:#fff;font-weight:400;letter-spacing:1.613px;">Rate</div>
<div class="a t" style="left:452.48px;top:578px;font-size:10px;line-height:10px;color:#fff;font-weight:400;letter-spacing:1.608px;">Pay Amt</div>
<div class="a t" style="left:639.15px;top:578px;font-size:10px;line-height:10px;color:#fff;font-weight:400;letter-spacing:1.232px;">Status</div>
<div class="a" style="left:29px;top:593px;width:740px;height:21px;background:#fff;border-bottom:1px solid #d0d0d0;box-sizing:border-box"></div>
<div class="a" style="left:768px;top:593px;width:1px;height:21px;background:#1a3a52"></div>
<div class="a" style="left:28px;top:593px;width:2px;height:21px;background:#176288"></div>
<div class="a" style="left:97px;top:593px;width:1px;height:20px;background:#e2e2e2"></div>
<div class="a" style="left:213px;top:593px;width:1px;height:20px;background:#e2e2e2"></div>
<div class="a" style="left:317px;top:593px;width:1px;height:20px;background:#e2e2e2"></div>
<div class="a" style="left:462px;top:593px;width:1px;height:20px;background:#e2e2e2"></div>
<div class="a" style="left:647px;top:593px;width:1px;height:20px;background:#e2e2e2"></div>
<div class="a" style="left:33px;top:595px;width:44px;height:15px;background:#f7f7f7;border:1px solid #dedede;box-sizing:border-box;border-radius:2px"></div>
<div class="a t" style="left:37.68px;top:598px;font-size:10px;line-height:10px;color:#6e6e6e;font-weight:400;letter-spacing:0.460px;">DEF</div>
<svg class="a" style="left:62px;top:599px" width="10" height="6" viewBox="0 0 10 6"><polyline points="1,1 5.0,5 9,1" fill="none" stroke="#6a6a6a" stroke-width="2"/></svg>
<div class="a" style="left:101px;top:595px;width:102px;height:15px;background:#f7f7f7;border:1px solid #dedede;box-sizing:border-box;border-radius:2px"></div>
<div class="a t" style="left:106.11px;top:598px;font-size:10px;line-height:10px;color:#6e6e6e;font-weight:400;letter-spacing:1.220px;">01 - Hourly</div>
<svg class="a" style="left:188px;top:599px" width="10" height="6" viewBox="0 0 10 6"><polyline points="1,1 5.0,5 9,1" fill="none" stroke="#6a6a6a" stroke-width="2"/></svg>
<div class="a" style="left:216px;top:593px;width:99px;height:18px;background:#f7f7f7;border:1px solid #dadada;box-sizing:border-box;border-radius:2px"></div>
<div class="a t" style="left:284.94px;top:598px;font-size:10px;line-height:10px;color:#222;font-weight:400;letter-spacing:1.693px;">1.00</div>
<div class="a" style="left:320px;top:593px;width:85px;height:18px;background:#f7f7f7;border:1px solid #dadada;box-sizing:border-box;border-radius:2px"></div>
<div class="a t" style="left:361.90px;top:598px;font-size:10px;line-height:10px;color:#222;font-weight:400;letter-spacing:1.680px;">$12.00</div>
<div class="a" style="left:466px;top:593px;width:106px;height:18px;background:#f7f7f7;border:1px solid #dadada;box-sizing:border-box;border-radius:2px"></div>
<div class="a t" style="left:529.00px;top:598px;font-size:10px;line-height:10px;color:#222;font-weight:400;letter-spacing:1.640px;">$12.00</div>
<div class="a" style="left:651px;top:595px;width:109px;height:16px;background:#f7f7f7;border:1px solid #dedede;box-sizing:border-box;border-radius:2px"></div>
<div class="a t" style="left:655.74px;top:598px;font-size:10px;line-height:10px;color:#6e6e6e;font-weight:400;letter-spacing:1.232px;">10 - Cancelled</div>
<svg class="a" style="left:745px;top:599px" width="10" height="6" viewBox="0 0 10 6"><polyline points="1,1 5.0,5 9,1" fill="none" stroke="#6a6a6a" stroke-width="2"/></svg>
<svg class="a" style="left:14px;top:673px" width="16" height="17" viewBox="0 0 16 17">
<path d="M1.5,15.5 L2.1,10.7 L7.7,4.1 L11.7,7.4 L6.1,14 Z" fill="#f0c4c4" stroke="#a04848" stroke-width="0.9" stroke-linejoin="round"/>
<path d="M1.5,15.5 L2.1,10.7 L6.1,14 Z" fill="#fff" stroke="#a04848" stroke-width="0.6"/>
<path d="M1.3,15.7 L1.8,13.3 L3.6,14.8 Z" fill="#6a1a1a"/>
<path d="M7.7,4.1 L8.5,3.2 L12.5,6.5 L11.7,7.4 Z" fill="#cfcfcf"/>
<path d="M8.5,3.2 L10,1.5 Q11.5,0.8 13,2 Q14.2,3.3 13.8,4.8 L12.5,6.5 Z" fill="#b03838"/>
</svg>
<svg class="a" style="left:40px;top:668px" width="18" height="18" viewBox="0 0 18 18">
<defs><linearGradient id="stk" x1="0" y1="0" x2="1" y2="1"><stop offset="0" stop-color="#ffe27a"/><stop offset="0.5" stop-color="#fff0b0"/><stop offset="1" stop-color="#ffc030"/></linearGradient></defs>
<rect x="1.5" y="3" width="13" height="13" fill="#f8b020" stroke="#c05a00" stroke-width="1"/>
<path d="M3.5,1 H16.5 V14 H6 L3.5,11.5 Z" fill="url(#stk)" stroke="#b05000" stroke-width="1"/>
<path d="M3.5,11.5 L6,11.5 L6,14 Z" fill="#e0a040" stroke="#704010" stroke-width="0.6"/>
<circle cx="5" cy="12.6" r="0.8" fill="#8a8ae0"/>
</svg>
<div class="a t" style="left:75.68px;top:677px;font-size:10px;line-height:10px;color:#1d6a98;font-weight:400;letter-spacing:1.339px;text-decoration:underline">Add Reason Code</div>
<div class="a" style="left:342px;top:667px;width:35px;height:25px;background:linear-gradient(#b0ddf2,#66b2d9 42%,#4e9fca);border:1px solid #163e56;box-sizing:border-box"></div>
<div class="a t" style="left:346.35px;top:675px;font-size:10px;line-height:10px;color:#1e2e3a;font-weight:400;letter-spacing:1.067px;">Save</div>
<div class="a" style="left:381px;top:667px;width:39px;height:25px;background:linear-gradient(#b0ddf2,#66b2d9 42%,#4e9fca);border:1px solid #163e56;box-sizing:border-box"></div>
<div class="a t" style="left:385.40px;top:675px;font-size:10px;line-height:10px;color:#1e2e3a;font-weight:400;letter-spacing:1.168px;">Close</div>
<svg class="a" style="left:303px;top:640px" width="48" height="48" viewBox="0 0 48 48">
<defs><filter id="sh" x="-20%" y="-20%" width="140%" height="140%"><feDropShadow dx="0.5" dy="1" stdDeviation="1" flood-color="#000" flood-opacity="0.35"/></filter></defs>
<circle cx="23.3" cy="22.5" r="20.5" fill="#ee0000" filter="url(#sh)"/>
<text x="23.8" y="33" text-anchor="middle" font-family="Liberation Sans" font-weight="400" font-size="30" fill="#fff" stroke="#fff" stroke-width="0.3">7</text>
</svg>
</body></html>
